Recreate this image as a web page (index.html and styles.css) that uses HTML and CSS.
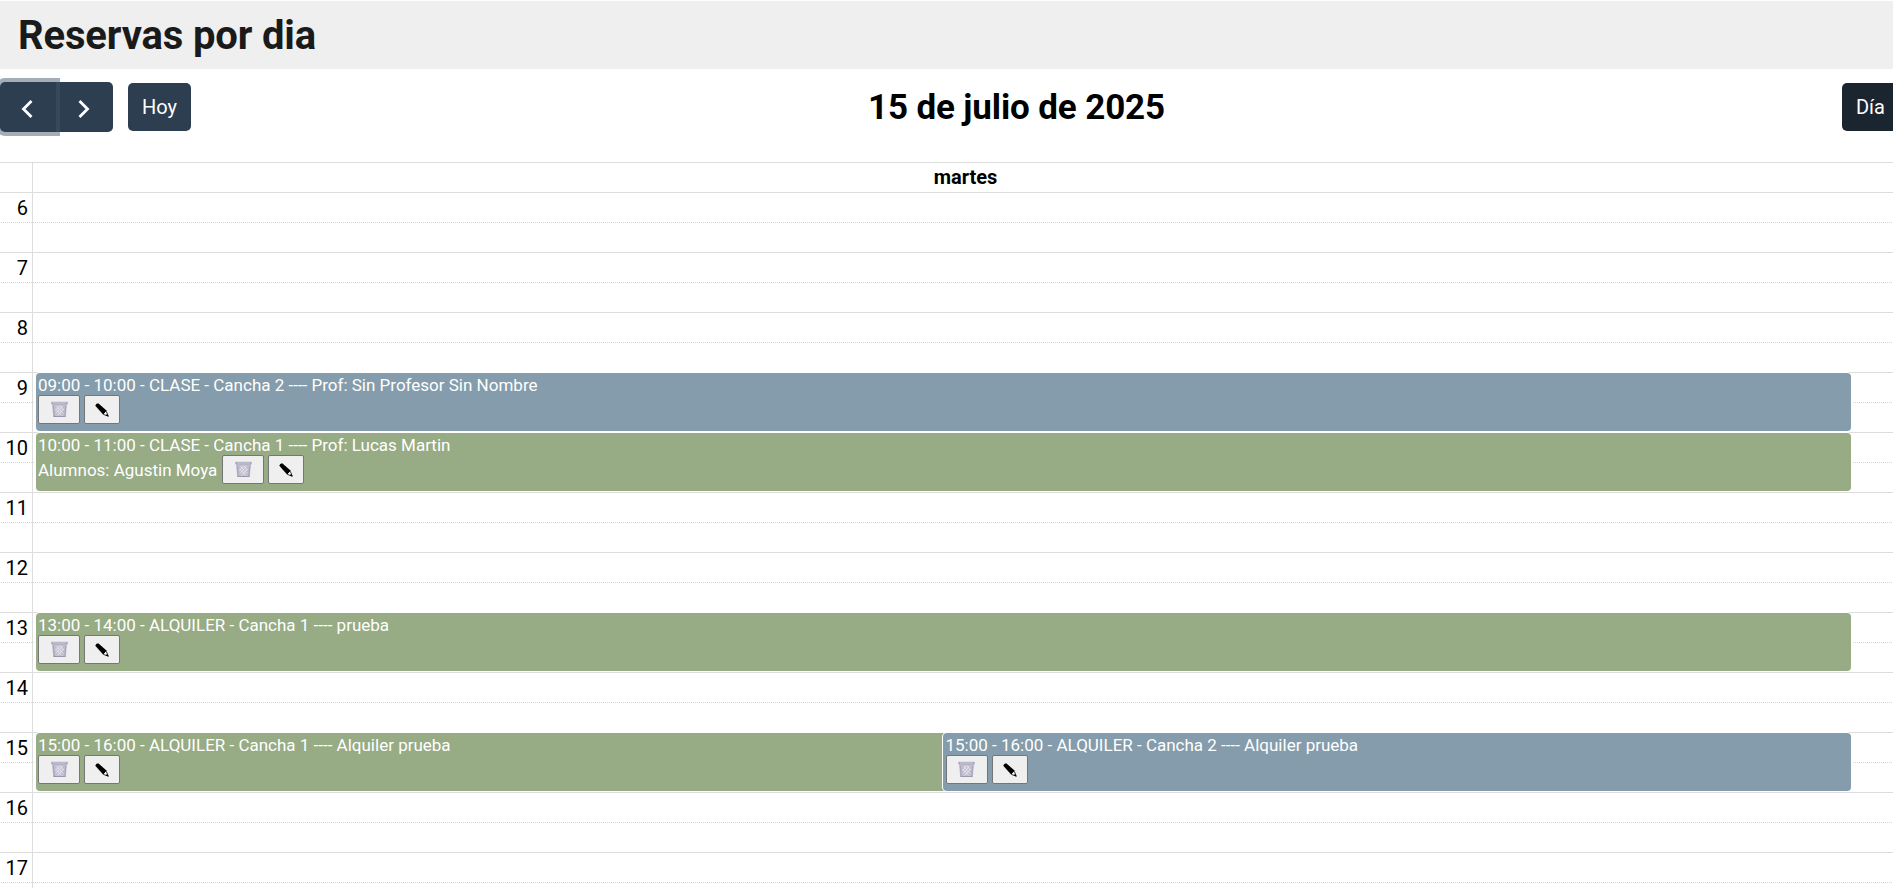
FILE: index.html
```
<!DOCTYPE html>
<html lang="es">
<head>
<meta charset="utf-8">
<title>Reservas por dia</title>
<link rel="stylesheet" href="styles.css">
</head>
<body>
<svg width="0" height="0" class="defs" aria-hidden="true">
  <symbol id="trash" viewBox="0 0 17 17">
    <path d="M1 2h15l-1.200 14H2.200z" fill="#bfbdce"/>
    <path d="M2.200 4.500l1 11M14.800 4.500l-1 11" stroke="#a9a6bb" stroke-width="1.200" fill="none"/>
    <path d="M5.500 5l6.500 7.500M8.500 4.500l4 4.500M4.800 8l6 6.500M11.500 5L5 12.500M8.500 5l-4 4.500M12.500 8l-6 6.500" stroke="#e9e8f0" stroke-width=".9" fill="none"/>
    <path d="M.3 .8h16.400v2.600H.3z" fill="#aaa7bc"/>
    <path d="M2 2h13" stroke="#d5d3df" stroke-width=".8"/>
    <path d="M2.600 15.500h11.800" stroke="#9a97af"/>
  </symbol>
  <symbol id="pencil" viewBox="0 0 14 14">
    <path d="M.3 2.700Q.8.500 3.200.3l8.600 7.500-3.500 3.900z" fill="#000"/>
    <path d="M11.300 8.300l1.900 4.800-4.800-1.700" fill="#fff" stroke="#000" stroke-width=".8"/>
    <path d="M12.200 10.700l1.500 3-3.100-1.100z" fill="#000"/>
  </symbol>
</svg>
<header class="page-head"><h1>Reservas por dia</h1></header>
<div class="toolbar">
  <div class="left">
    <div class="group">
      <button class="btn nav focus" aria-label="Anterior"><svg width="12" height="20" viewBox="0 0 12 20"><path d="M10.500 2L2.500 10l8 8" /></svg></button><button class="btn nav next" aria-label="Siguiente"><svg width="12" height="20" viewBox="0 0 12 20"><path d="M1.500 2l8 8-8 8"/></svg></button>
    </div>
    <button class="btn today">Hoy</button>
  </div>
  <h2>15 de julio de 2025</h2>
  <button class="btn day">Día</button>
</div>
<main class="calendar">
  <div class="day-head"><div class="axis"></div><div class="name">martes</div></div>
  <div class="hour"><div class="axis">6</div><div class="slot"></div></div>
  <div class="hour"><div class="axis">7</div><div class="slot"></div></div>
  <div class="hour"><div class="axis">8</div><div class="slot"></div></div>
  <div class="hour"><div class="axis">9</div><div class="slot">
    <div class="event blue"><p>09:00 - 10:00 - CLASE - Cancha 2 ---- Prof: Sin Profesor Sin Nombre</p><div class="actions"><button class="del"><svg><use href="#trash"/></svg></button><button class="edit"><svg><use href="#pencil"/></svg></button></div></div>
  </div></div>
  <div class="hour"><div class="axis">10</div><div class="slot">
    <div class="event green"><p>10:00 - 11:00 - CLASE - Cancha 1 ---- Prof: Lucas Martin</p><div class="actions"><span>Alumnos: Agustin Moya</span><button class="del"><svg><use href="#trash"/></svg></button><button class="edit"><svg><use href="#pencil"/></svg></button></div></div>
  </div></div>
  <div class="hour"><div class="axis">11</div><div class="slot"></div></div>
  <div class="hour"><div class="axis">12</div><div class="slot"></div></div>
  <div class="hour"><div class="axis">13</div><div class="slot">
    <div class="event green"><p>13:00 - 14:00 - ALQUILER - Cancha 1 ---- prueba</p><div class="actions"><button class="del"><svg><use href="#trash"/></svg></button><button class="edit"><svg><use href="#pencil"/></svg></button></div></div>
  </div></div>
  <div class="hour"><div class="axis">14</div><div class="slot"></div></div>
  <div class="hour"><div class="axis">15</div><div class="slot">
    <div class="event green first"><p>15:00 - 16:00 - ALQUILER - Cancha 1 ---- Alquiler prueba</p><div class="actions"><button class="del"><svg><use href="#trash"/></svg></button><button class="edit"><svg><use href="#pencil"/></svg></button></div></div>
    <div class="event blue second"><p>15:00 - 16:00 - ALQUILER - Cancha 2 ---- Alquiler prueba</p><div class="actions"><button class="del"><svg><use href="#trash"/></svg></button><button class="edit"><svg><use href="#pencil"/></svg></button></div></div>
  </div></div>
  <div class="hour"><div class="axis">16</div><div class="slot"></div></div>
  <div class="hour"><div class="axis">17</div><div class="slot"></div></div>
</main>
</body>
</html>
```
FILE: styles.css
```
* { box-sizing: border-box; }
body { margin: 0; height: 888px; overflow: hidden; background: #fff; color: #000; font-family: Roboto, sans-serif; font-size: 20px; }
h1, h2, p { margin: 0; }
button { font: inherit; margin: 0; }
.defs { display: block; position: absolute; }
.page-head { margin-top: 1px; height: 68px; background: #efefef; padding-left: 18px; }
h1 { font-size: 40px; line-height: 70px; font-weight: 700; color: #1a1a1a; letter-spacing: -.15px; white-space: nowrap; }
.toolbar { height: 93px; padding-top: 13px; display: flex; align-items: flex-start; justify-content: space-between; }
.left { display: flex; align-items: center; gap: 15px; }
.group { display: flex; }
.btn { border: 0; border-radius: 5px; background: #2c3e50; color: #fff; height: 48px; padding: 0 14px; }
.nav { height: 50px; width: 57px; padding: 0; display: flex; align-items: center; justify-content: center; }
.nav svg { fill: none; stroke: #fff; stroke-width: 2.800; margin-top: 3px; margin-right: 2px; }
.nav.focus { position: relative; z-index: 1; width: 56px; border-radius: 5px 0 0 5px; box-shadow: 0 0 0 4px rgba(67,84,102,.48); }
.nav.next { border-radius: 0 5px 5px 0; }
.today { width: 63px; }
.toolbar h2 { font-size: 35px; line-height: 52px; font-weight: 700; letter-spacing: -.13px; white-space: nowrap; }
.day { background: #1a252f; margin-top: 1px; width: 51px; padding: 0 0 0 14px; text-align: left; border-radius: 5px 0 0 5px; }
.calendar { width: 100%; }
.day-head { display: flex; height: 30px; border-top: 1px solid #ddd; }
.axis { width: 33px; flex: none; border-right: 1px solid #ddd; text-align: right; padding-right: 5px; line-height: 31px; }
.hour .axis { padding-right: 4px; }
.name { flex: 1; text-align: center; font-weight: 700; line-height: 29px; padding-left: 5px; }
.hour { display: flex; height: 60px; border-top: 1px solid #ddd; }
.slot { flex: 1; display: flex; padding: 0 42px 1px 3px; }
.hour { background: repeating-linear-gradient(90deg, transparent 0 1px, #d4d4d4 1px 2px) 0 29px / 100% 1px no-repeat; }
.event { flex: 1; height: 58px; border-radius: 4px; padding: 2px; color: #fff; font-size: 17px; box-shadow: 0 0 0 1px #fff; }
.event p { line-height: 20px; white-space: nowrap; }
.blue { background: #849cab; }
.green { background: #97ab84; }
.first { border-radius: 4px 0 0 4px; }
.second { margin-left: -1px; padding-left: 3px; }
.actions { display: flex; align-items: center; gap: 4px; }
.actions span { margin-right: 1px; }
.actions button { height: 29px; border: 1px solid #767676; border-radius: 2px; background: #efefef; padding: 0; display: flex; align-items: center; justify-content: center; }
.del { width: 42px; }
.edit { width: 36px; }
.del svg { width: 17px; height: 17px; }
.edit svg { width: 14px; height: 14px; }
```
